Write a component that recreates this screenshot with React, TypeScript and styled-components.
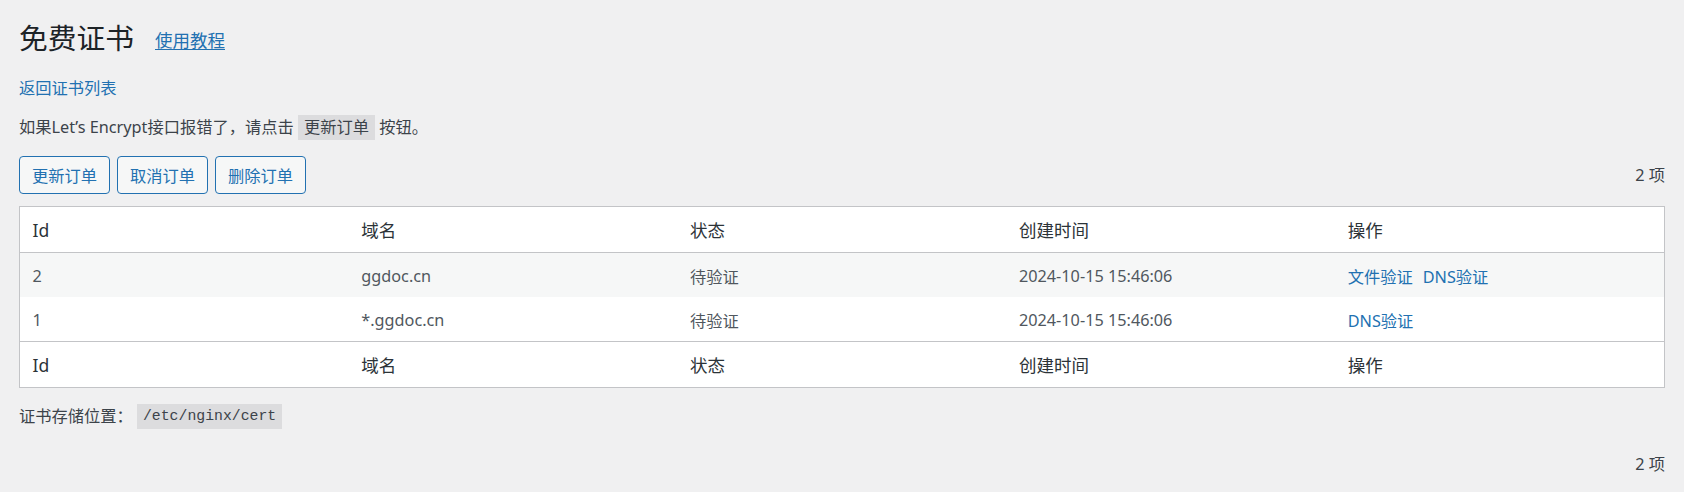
import React from 'react'
import styled, { createGlobalStyle } from 'styled-components'

const GlobalStyle = createGlobalStyle`
    html, body {
        margin: 0;
        padding: 0;
        background: #f0f0f1;
    }
    body {
        font-family: "Noto Sans", "Noto Sans CJK SC", sans-serif;
        font-size: 16.25px;
        color: #3c434a;
    }
`

type Order = {
    id: number
    domain: string
    status: string
    created: string
    actions: string[]
}

const orders: Order[] = [
    { id: 2, domain: 'ggdoc.cn', status: '待验证', created: '2024-10-15 15:46:06', actions: ['文件验证', 'DNS验证'] },
    { id: 1, domain: '*.ggdoc.cn', status: '待验证', created: '2024-10-15 15:46:06', actions: ['DNS验证'] },
]

const columns = ['Id', '域名', '状态', '创建时间', '操作']

function App() {
    return (
        <>
            <GlobalStyle />
            <Wrap>
                <TitleRow>
                    <Title>免费证书</Title>
                    <TutorialLink href="#">使用教程</TutorialLink>
                </TitleRow>

                <Line $top={19}>
                    <PlainLink href="#">返回证书列表</PlainLink>
                </Line>

                <Line $top={15}>
                    如果Let’s Encrypt接口报错了，请点击 <Code>更新订单</Code> 按钮。
                </Line>

                <Toolbar>
                    <Actions>
                        <Button>更新订单</Button>
                        <Button>取消订单</Button>
                        <Button>删除订单</Button>
                    </Actions>
                    <Count>2 项</Count>
                </Toolbar>

                <Table>
                    <thead>
                        <tr>
                            {columns.map((c) => (
                                <HeadCell key={c}>{c}</HeadCell>
                            ))}
                        </tr>
                    </thead>
                    <tbody>
                        {orders.map((o, i) => (
                            <Row key={o.id} $striped={i % 2 === 0}>
                                <Cell>{o.id}</Cell>
                                <Cell>{o.domain}</Cell>
                                <Cell>{o.status}</Cell>
                                <Cell>{o.created}</Cell>
                                <Cell>
                                    <LinkGroup>
                                        {o.actions.map((a) => (
                                            <PlainLink key={a} href="#">{a}</PlainLink>
                                        ))}
                                    </LinkGroup>
                                </Cell>
                            </Row>
                        ))}
                    </tbody>
                    <tfoot>
                        <tr>
                            {columns.map((c) => (
                                <FootCell key={c}>{c}</FootCell>
                            ))}
                        </tr>
                    </tfoot>
                </Table>

                <Line $top={16}>
                    证书存储位置： <Code $mono>/etc/nginx/cert</Code>
                </Line>

                <BottomBar>
                    <Count>2 项</Count>
                </BottomBar>
            </Wrap>
        </>
    )
}

export default App

const Wrap = styled.div`
    padding: 18px 19px 20px 19px;
`

const TitleRow = styled.div`
    display: flex;
    align-items: center;
    gap: 21px;
    height: 39px;
`

const Title = styled.h1`
    margin: 0;
    font-size: 28.75px;
    font-weight: 400;
    line-height: 39px;
    color: #1d2327;
`

const TutorialLink = styled.a`
    font-size: 17.5px;
    line-height: 24px;
    margin-top: 5px;
    color: #2271b1;
    text-decoration: underline;
    text-underline-offset: 2px;
`

const PlainLink = styled.a`
    color: #2271b1;
    text-decoration: none;
`

const Line = styled.p<{ $top: number }>`
    margin: ${(p) => p.$top}px 0 0 0;
    line-height: 24px;
    height: 24px;
`

const Code = styled.code<{ $mono?: boolean }>`
    display: inline-block;
    height: 25px;
    line-height: 25px;
    padding: 0 6px;
    vertical-align: middle;
    margin-top: -2px;
    background: #dcdcde;
    color: #3c434a;
    font-family: ${(p) => (p.$mono ? '"Liberation Mono", monospace' : '"Noto Sans", "Noto Sans CJK SC", sans-serif')};
    font-size: ${(p) => (p.$mono ? '14.8px' : '16.25px')};
`

const Toolbar = styled.div`
    display: flex;
    align-items: center;
    justify-content: space-between;
    margin-top: 17px;
`

const Actions = styled.div`
    display: flex;
    gap: 7px;
`

const Button = styled.button`
    height: 38px;
    width: 91px;
    padding: 0;
    border: 1px solid #2271b1;
    border-radius: 4px;
    background: #f6f7f7;
    color: #2271b1;
    font-family: inherit;
    font-size: 16.25px;
    cursor: pointer;
`

const Count = styled.span`
    font-size: 16.25px;
    color: #3c434a;
    line-height: 24px;
`

const Table = styled.table`
    width: 100%;
    margin-top: 12px;
    border: 1px solid #c3c4c7;
    border-collapse: separate;
    border-spacing: 0;
    table-layout: fixed;
    background: #fff;
`

const HeadCell = styled.th`
    height: 46px;
    padding: 0 12.5px;
    box-sizing: border-box;
    text-align: left;
    font-weight: 400;
    font-size: 17.5px;
    color: #2c3338;
    border-bottom: 1px solid #c3c4c7;
`

const FootCell = styled(HeadCell)`
    border-bottom: none;
    border-top: 1px solid #c3c4c7;
`

const Row = styled.tr<{ $striped: boolean }>`
    background: ${(p) => (p.$striped ? '#f6f7f7' : '#fff')};
`

const Cell = styled.td`
    height: 44px;
    padding: 2px 12.5px 0 12.5px;
    box-sizing: border-box;
    font-size: 16.25px;
    color: #50575e;
`

const LinkGroup = styled.div`
    display: flex;
    gap: 10px;
`

const BottomBar = styled.div`
    display: flex;
    justify-content: flex-end;
    margin-top: 24px;
`
